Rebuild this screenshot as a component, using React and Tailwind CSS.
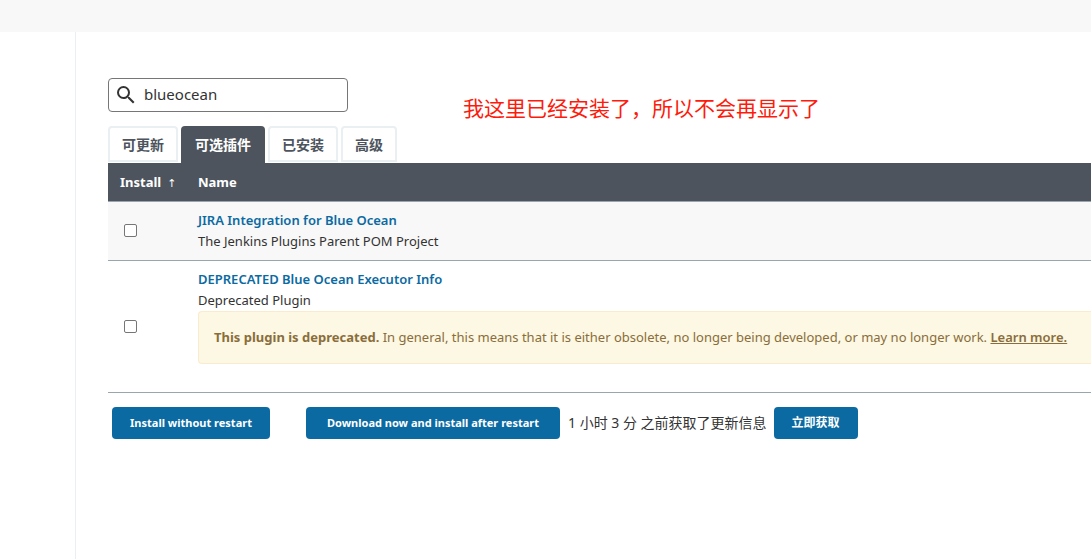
import { useState } from "react";

const tabs = ["可更新", "可选插件", "已安装", "高级"];

function SearchIcon() {
  return (
    <svg viewBox="0 0 24 24" className="size-6 shrink-0 fill-[#333]" aria-hidden="true">
      <path d="M15.5 14h-.79l-.28-.27A6.471 6.471 0 0 0 16 9.500 6.500 6.500 0 1 0 9.500 16c1.610 0 3.090-.59 4.230-1.570l.27.28v.79l5 4.990L20.490 19l-4.990-5zm-6 0C7.010 14 5 11.990 5 9.500S7.010 5 9.500 5 14 7.010 14 9.500 11.990 14 9.500 14z" />
    </svg>
  );
}

function Tab({ label, active, onClick }) {
  return (
    <button
      type="button"
      role="tab"
      aria-selected={active}
      onClick={onClick}
      className={
        active
          ? "h-[37px] rounded-t bg-[#4d545d] px-3.5 text-sm font-bold text-white"
          : "h-9 rounded-t border-2 border-[#eaeff2] bg-white px-3 pt-0.5 text-sm font-bold text-[#4d545d]"
      }
    >
      {label}
    </button>
  );
}

function PluginRow({ id, title, description, shaded, children }) {
  return (
    <tr className={shaded ? "border-b border-[#98a6b0] bg-[#f8f8f8]" : "border-b border-[#98a6b0]"}>
      <td className="px-4 py-2 align-middle">
        <input
          id={id}
          type="checkbox"
          aria-label={title}
          className="block size-[13px] appearance-none rounded-xs border border-[#767676] bg-white checked:bg-[#0b6aa2]"
        />
      </td>
      <td className="py-2 text-[13px] leading-[21px]">
        <a href="#" className="block font-semibold text-[#0b6aa2]">
          {title}
        </a>
        <label htmlFor={id} className="block text-[#333]">
          {description}
        </label>
        {children}
      </td>
    </tr>
  );
}

function ActionButton({ className, children }) {
  return (
    <button
      type="button"
      className={`h-8 rounded bg-[#0b6aa2] px-[18px] font-bold whitespace-nowrap text-white ${className}`}
    >
      {children}
    </button>
  );
}

export default function App() {
  const [active, setActive] = useState(1);
  const [query, setQuery] = useState("blueocean");
  return (
    <div className="flex min-h-screen flex-col bg-white font-['Noto_Sans','Noto_Sans_CJK_SC',sans-serif] text-sm text-[#333]">
      <header className="h-8 bg-[#f8f8f8]" />
      <div className="flex grow">
        <aside className="w-[76px] shrink-0 border-r border-[#eaeff2]" />
        <main className="min-w-0 grow overflow-hidden pt-[46px] pl-8">
          <div className="flex items-start gap-[115px]">
            <label className="flex h-[34px] w-60 items-center gap-1.5 rounded border border-[#767676] px-[5px]">
              <SearchIcon />
              <input
                type="text"
                aria-label="Search"
                value={query}
                onChange={(e) => setQuery(e.target.value)}
                className="min-w-0 grow bg-transparent text-[15px] text-[#333] outline-none"
              />
            </label>
            <p className="pt-[18px] text-[21px] leading-6 whitespace-nowrap text-[#fe1b0b]">
              我这里已经安装了，所以不会再显示了
            </p>
          </div>

          <div role="tablist" className="mt-1.5 flex items-start gap-[3px]">
            {tabs.map((label, i) => (
              <Tab key={label} label={label} active={i === active} onClick={() => setActive(i)} />
            ))}
          </div>

          <table className="w-full border-collapse">
            <thead>
              <tr className="h-[38px] border-b border-[#98a6b0] bg-[#4d545d] text-left text-[13px] text-white">
                <th className="w-[90px] pt-0.5 pl-3 font-bold whitespace-nowrap">
                  Install<span className="ml-1.5 font-['DejaVu_Sans'] text-[11px] leading-none font-normal">↑</span>
                </th>
                <th className="pt-0.5 font-bold">Name</th>
              </tr>
            </thead>
            <tbody>
              <PluginRow
                id="jira"
                title="JIRA Integration for Blue Ocean"
                description="The Jenkins Plugins Parent POM Project"
                shaded
              />
              <PluginRow id="executor" title="DEPRECATED Blue Ocean Executor Info" description="Deprecated Plugin">
                <div className="mb-5 rounded-l border border-r-0 border-[#faebcc] bg-[#fcf8e3] p-[15px] pr-0 whitespace-nowrap text-[#8a6d3b]">
                  <strong>This plugin is deprecated.</strong> In general, this means that it is either obsolete, no
                  longer being developed, or may no longer work.{" "}
                  <a href="#" className="font-semibold underline">
                    Learn more.
                  </a>
                </div>
              </PluginRow>
            </tbody>
          </table>

          <div className="mt-3.5 flex items-center pl-1">
            <ActionButton className="min-w-[158px] text-[11px]">Install without restart</ActionButton>
            <div className="ml-9 flex items-center">
              <ActionButton className="min-w-[254px] text-[11px]">Download now and install after restart</ActionButton>
              <span className="mr-[7px] ml-2 whitespace-nowrap">1 小时 3 分 之前获取了更新信息</span>
              <ActionButton className="text-xs">立即获取</ActionButton>
            </div>
          </div>
        </main>
      </div>
    </div>
  );
}
